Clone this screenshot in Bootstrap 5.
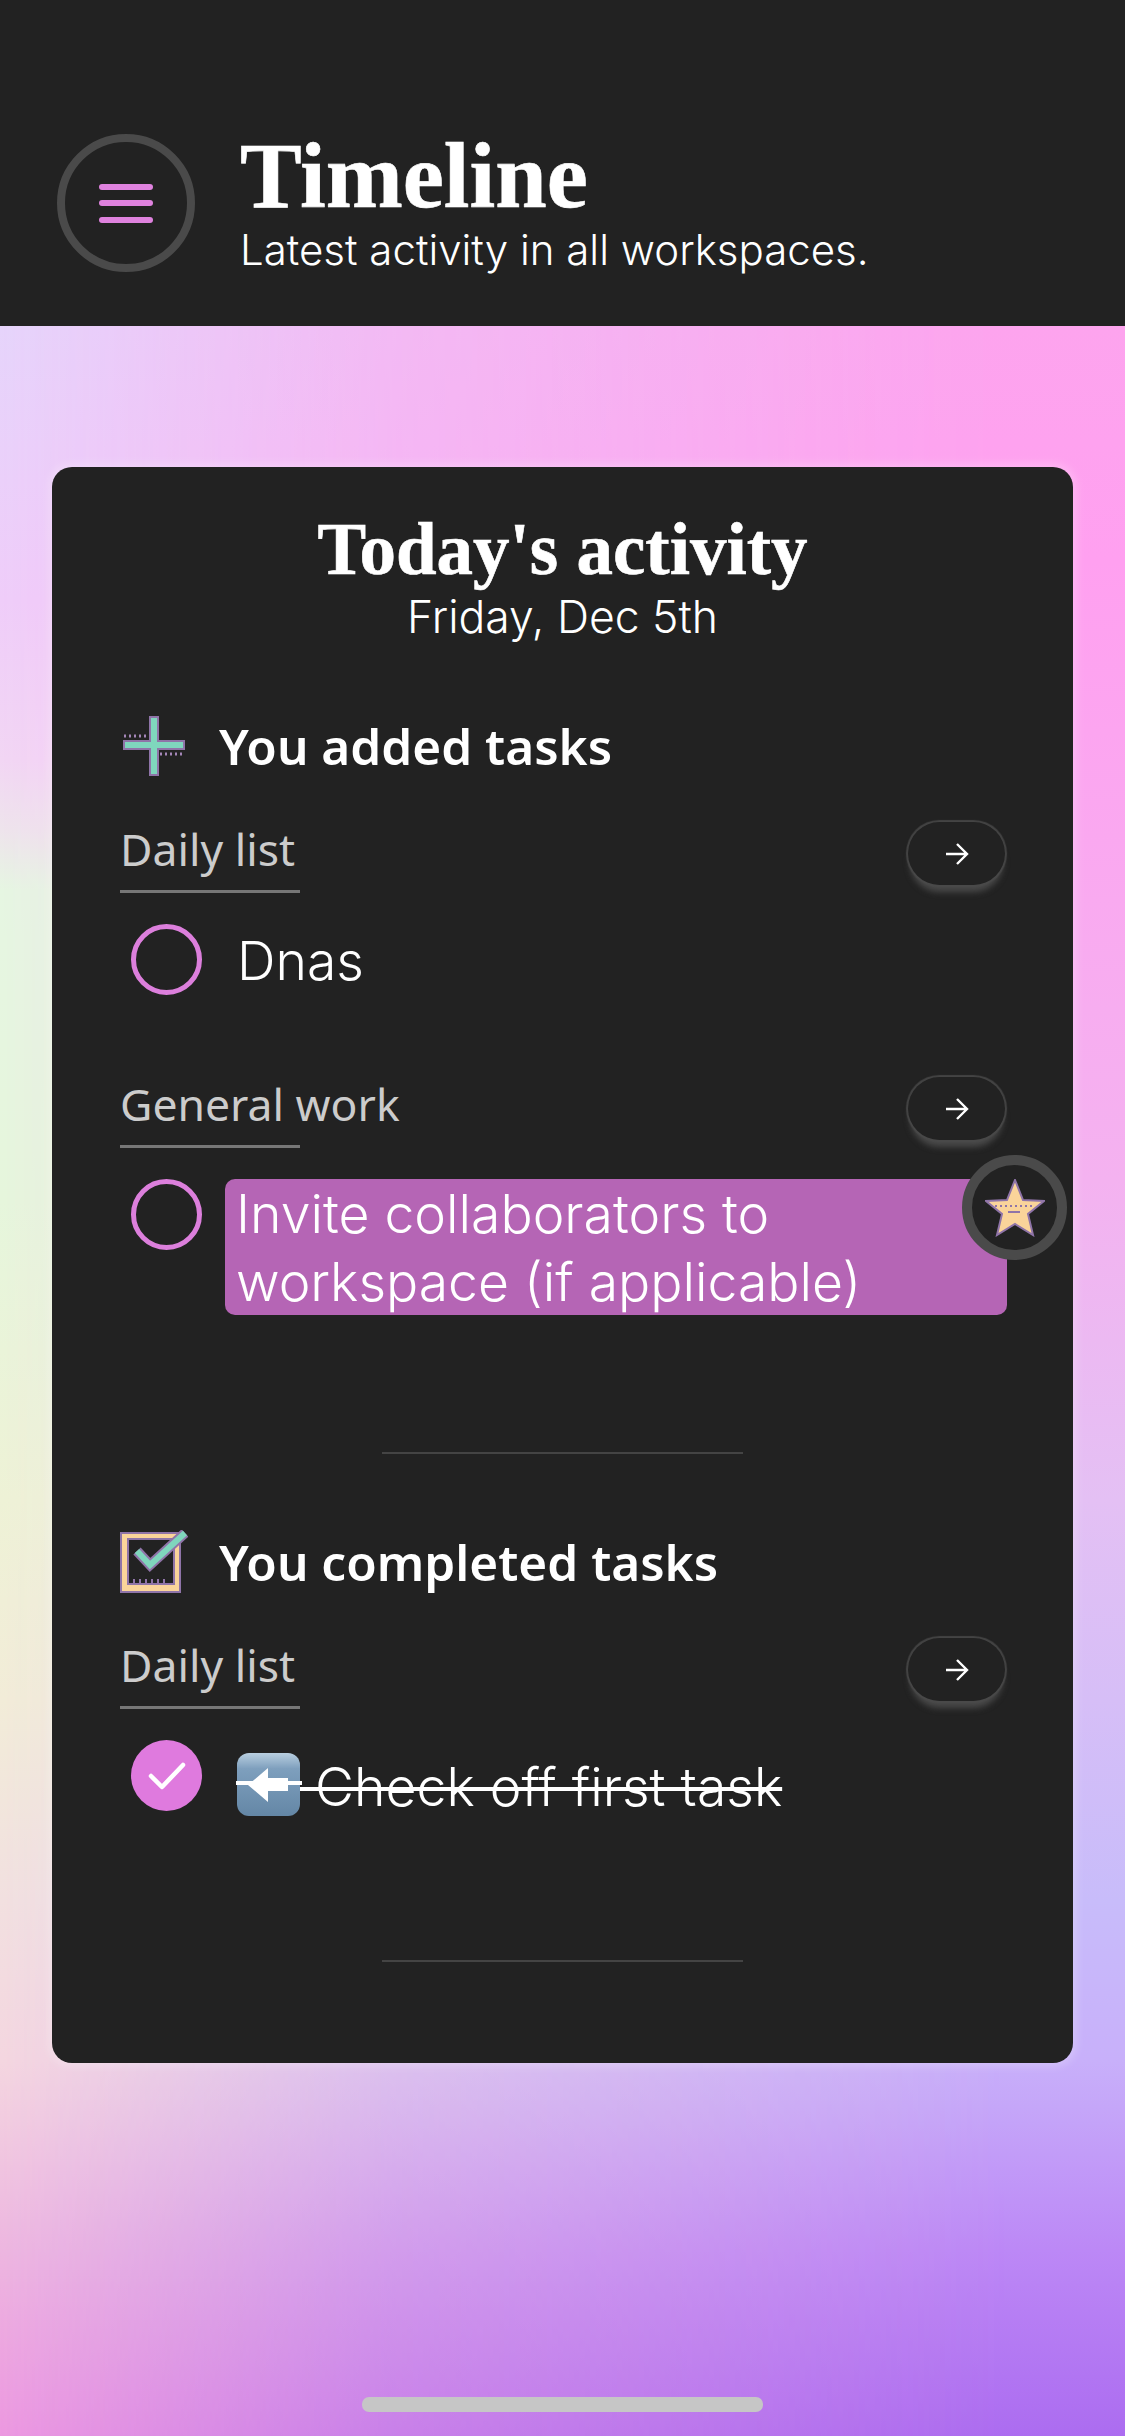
<!DOCTYPE html>
<html lang="en">
<head>
<meta charset="UTF-8">
<title>Timeline</title>
<link href="https://cdn.jsdelivr.net/npm/bootstrap@5.3.0/dist/css/bootstrap.min.css" rel="stylesheet">
<style>
body {
    min-height: 2436px;
    font-family: "Inter", sans-serif;
    color: #fff;
    background: linear-gradient(to bottom, #fda4ee 0, #fda4ee 326px, #ffa0f0 560px, #f4b2f0 1180px, #e4c0f4 1500px, #c8bcfa 1900px, #c8b0fa 2060px, #bc88f6 2250px, #ac6cf0 2436px);
}
/* left side colours, faded out towards the right */
body::before {
    content: "";
    position: absolute;
    inset: 0 0 auto 0;
    height: 2436px;
    z-index: -1;
    background: linear-gradient(to bottom, #e6d4fb 326px, #efcdf9 600px, #f2d6f4 760px, #eee4ec 830px, #e6f6e2 890px, #e6f6dc 1200px, #eef2d6 1500px, #f2ecd8 1700px, #f2e0e0 1900px, #f4d6e0 2060px, #edb6e0 2250px, #ec98e0 2436px);
    -webkit-mask-image: linear-gradient(to right, #000, rgba(0,0,0,.45) 35%, transparent 90%);
    mask-image: linear-gradient(to right, #000, rgba(0,0,0,.45) 35%, transparent 90%);
}
.app-header { height: 326px; background: #222; padding: 134px 0 0 57px; }
.menu-btn { width: 138px; height: 138px; border: 8px solid #4a4a4a; gap: 10.5px; }
.menu-btn span { width: 54px; height: 6px; border-radius: 3px; background: #df82de; }
.head-text { margin-left: 45px; margin-top: 0; }
.serif-title { font-family: "Liberation Serif", serif; font-weight: 700; -webkit-text-stroke: .6px #fff; }
.page-title { font-size: 92.500px; line-height: 84px; margin: 0; }
.page-sub { font-size: 42px; line-height: 54px; font-weight: 300; margin: 5px 0 0; }
.main-card { margin: 141px 52px 0; height: 1596px; background: #222; border: 0; border-radius: 20px; padding: 46px 68px 0; box-shadow: 0 0 8px 4px rgba(255,255,255,.22); }
.card-title-text { font-size: 73px; line-height: 74px; margin: 0; }
.card-date { font-size: 44.500px; line-height: 54px; font-weight: 300; margin: 3px 0 0; }
.sec-head { height: 64px; gap: 31px; margin-top: 70px; }
.sec-head h2 { font-family: "Noto Sans", sans-serif; font-weight: 600; font-size: 49.500px; line-height: 64px; margin: 0; }
.sec-head-two { margin-top: 76px; }
.list-head { height: 63px; margin-top: 44px; }
.list-head-next { margin-top: 82px; }
.list-name { font-family: "Noto Sans", sans-serif; font-size: 44.500px; line-height: 53px; color: #ccc; width: 180px; white-space: nowrap; border-bottom: 3px solid #777; height: 71px; }
.go-btn { width: 97px; height: 63px; padding: 0; border: 0; border-radius: 32px; background: #222; box-shadow: 0 9px 6px -2px #4a4a4a, 0 0 1px 2px #444; }
.task-row { margin-top: 39px; padding-left: 11px; gap: 25px; position: relative; }
.tick { width: 71px; height: 71px; flex: none; border: 5px solid #dc7fdc; }
.tick.done { background: #df7ade; border: 0; }
.task-text { font-size: 53.500px; line-height: 68px; font-weight: 300; padding: 2px 12px 0 10px; }
.task-text.hilite { background: #b565b5; border-radius: 10px; flex: 1; margin: 0 -2px; padding: 1px 11px 0; height: 136px; }
.star-btn { position: absolute; right: -62px; top: -24px; width: 105px; height: 105px; border: 10px solid #4a4a4a; background: #222; }
.done-wrap { margin-top: 13px; padding: 0 0 0 10px; white-space: nowrap; }
.done-text { text-decoration: line-through; text-decoration-thickness: 4px; }
.emoji-key { position: relative; width: 63px; height: 63px; flex: none; }
.emoji-key svg { display: block; }
.emoji-key::after { content: ""; position: absolute; left: -1px; right: -2px; top: 28px; height: 4px; background: #fff; }
.rule-line { width: 361px; height: 2px; background: #444; }
.rule-one { margin-top: 137px; }
.rule-two { margin-top: 139px; }
.home-bar { width: 401px; height: 15px; border-radius: 7px; background: #c6c6c6; margin: 334px auto 0; }
</style>
</head>
<body>
<header class="app-header d-flex align-items-start">
    <div class="menu-btn rounded-circle d-flex flex-column align-items-center justify-content-center">
        <span></span><span></span><span></span>
    </div>
    <div class="head-text">
        <h1 class="page-title serif-title">Timeline</h1>
        <p class="page-sub">Latest activity in all workspaces.</p>
    </div>
</header>

<main class="card main-card">
    <div class="text-center">
        <h2 class="card-title-text serif-title">Today's activity</h2>
        <p class="card-date">Friday, Dec 5th</p>
    </div>

    <div class="sec-head d-flex align-items-center">
        <svg width="68" height="60" viewBox="0 0 68 60">
            <path d="M30 1h8v24h26v8H38v26h-8V33H4v-8h26z" fill="#7fd6bd" stroke="#8f74a8" stroke-width="2"/>
            <path d="M4 20h24M40 38h24" stroke="#a486b8" stroke-width="3" stroke-dasharray="2 3"/>
        </svg>
        <h2>You added tasks</h2>
    </div>

    <div class="list-head d-flex justify-content-between align-items-start">
        <div class="list-name">Daily list</div>
        <button class="go-btn d-flex align-items-center justify-content-center"><svg width="24" height="24" viewBox="0 0 24 24" fill="none" stroke="#fff" stroke-width="2.4"><path d="M1 12h21M12 2l10 10-10 10"/></svg></button>
    </div>
    <div class="task-row d-flex align-items-center">
        <div class="tick rounded-circle"></div>
        <div class="task-text">Dnas</div>
    </div>

    <div class="list-head list-head-next d-flex justify-content-between align-items-start">
        <div class="list-name">General work</div>
        <button class="go-btn d-flex align-items-center justify-content-center"><svg width="24" height="24" viewBox="0 0 24 24" fill="none" stroke="#fff" stroke-width="2.4"><path d="M1 12h21M12 2l10 10-10 10"/></svg></button>
    </div>
    <div class="task-row d-flex align-items-start">
        <div class="tick rounded-circle"></div>
        <div class="task-text hilite">Invite collaborators to<br>workspace (if applicable)</div>
        <div class="star-btn rounded-circle d-flex align-items-center justify-content-center">
            <svg width="60" height="58" viewBox="0 0 60 58">
                <path d="M30 1l8 20 21 1-16 13 5 21-18-11-18 11 5-21L1 22l21-1z" fill="#fad49a" stroke="#8f74a8" stroke-width="2"/>
                <path d="M10 27h40" stroke="#8f74a8" stroke-width="2" stroke-dasharray="2 3"/>
                <path d="M23 33h12" stroke="#8f74a8" stroke-width="2"/>
            </svg>
        </div>
    </div>

    <div class="rule-line rule-one mx-auto"></div>

    <div class="sec-head sec-head-two d-flex align-items-center">
        <svg width="68" height="64" viewBox="0 0 68 64">
            <path d="M1 3h59v59H1z" fill="#fad49a" stroke="#8f74a8" stroke-width="2"/>
            <path d="M8 9h46v45H8z" fill="#222" stroke="#8f74a8" stroke-width="2"/>
            <path d="M14 49v5M20 49v5M26 49v5M32 49v5M38 49v5M44 49v5" stroke="#8f74a8" stroke-width="2"/>
            <path d="M17 21l13 14L65 3" fill="none" stroke="#8f74a8" stroke-width="10"/>
            <path d="M17 21l13 14L65 3" fill="none" stroke="#7fd6bd" stroke-width="6"/>
        </svg>
        <h2>You completed tasks</h2>
    </div>

    <div class="list-head d-flex justify-content-between align-items-start">
        <div class="list-name">Daily list</div>
        <button class="go-btn d-flex align-items-center justify-content-center"><svg width="24" height="24" viewBox="0 0 24 24" fill="none" stroke="#fff" stroke-width="2.4"><path d="M1 12h21M12 2l10 10-10 10"/></svg></button>
    </div>
    <div class="task-row d-flex align-items-start">
        <div class="tick done rounded-circle d-flex align-items-center justify-content-center">
            <svg width="38" height="30" viewBox="0 0 38 30" fill="none" stroke="#fff" stroke-width="4.500" stroke-linecap="round" stroke-linejoin="round"><path d="M3 15l11 11L35 4"/></svg>
        </div>
        <div class="task-text done-wrap d-flex">
            <span class="emoji-key"><svg width="63" height="63" viewBox="0 0 63 63">
                <defs><linearGradient id="blueKey" x1="0" y1="0" x2="0" y2="1"><stop offset="0" stop-color="#b9cfe0"/><stop offset=".25" stop-color="#7e9fbd"/><stop offset="1" stop-color="#6487a6"/></linearGradient></defs>
                <rect width="63" height="63" rx="12" fill="url(#blueKey)"/>
                <path d="M11 32l20-17v10h20v13H31v11z" fill="#fff"/>
            </svg></span><span class="done-text">&nbsp;Check off first task</span>
        </div>
    </div>

    <div class="rule-line rule-two mx-auto"></div>
</main>

<div class="home-bar"></div>

<script src="https://cdn.jsdelivr.net/npm/bootstrap@5.3.0/dist/js/bootstrap.bundle.min.js"></script>
</body>
</html>
